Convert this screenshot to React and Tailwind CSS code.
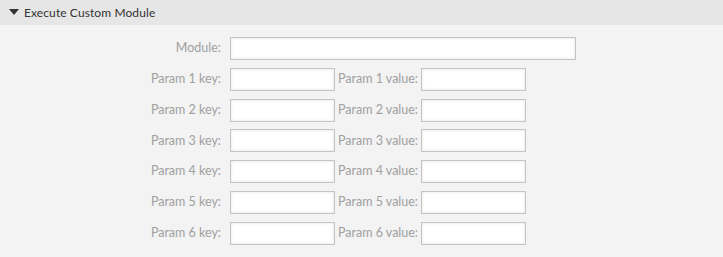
const rows = [1, 2, 3, 4, 5, 6];

const Field = ({ className }) => (
    <input
        type="text"
        className={`h-[23px] bg-white border border-[#c4c4c4] shadow-[inset_0_0_3px_rgba(0,0,0,0.12)] outline-none ${className}`}
    />
);

export default function App() {
    return (
        <div className="w-[723px] h-[257px] bg-[#f3f3f3] font-['Lato','Liberation_Sans',sans-serif] overflow-hidden">
            {/* Header */}
            <div className="h-[25px] bg-[#e6e6e6] flex items-center pl-[9px]">
                <svg width="10" height="6" viewBox="0 0 10 6" className="mr-[5px] mt-[-1px]">
                    <path d="M0 0 L10 0 L5 6 Z" fill="#333" />
                </svg>
                <span className="text-[12px] text-[#333] tracking-[0.1px]">Execute Custom Module</span>
            </div>

            {/* Body */}
            <div className="pt-[12px] flex flex-col gap-[7.8px]">
                <div className="flex items-center">
                    <label className="w-[221px] text-right text-[12.5px] text-[#a0a0a0]">Module:</label>
                    <Field className="ml-[9px] w-[346px]" />
                </div>
                {rows.map((n) => (
                    <div key={n} className="flex items-center">
                        <label className="w-[221px] text-right text-[12.5px] text-[#a0a0a0]">
                            Param {n} key:
                        </label>
                        <Field className="ml-[9px] w-[105px]" />
                        <label className="w-[86px] text-right pr-[3px] text-[12.5px] text-[#a0a0a0] whitespace-nowrap">
                            Param {n} value:
                        </label>
                        <Field className="w-[105px]" />
                    </div>
                ))}
            </div>
        </div>
    );
}
